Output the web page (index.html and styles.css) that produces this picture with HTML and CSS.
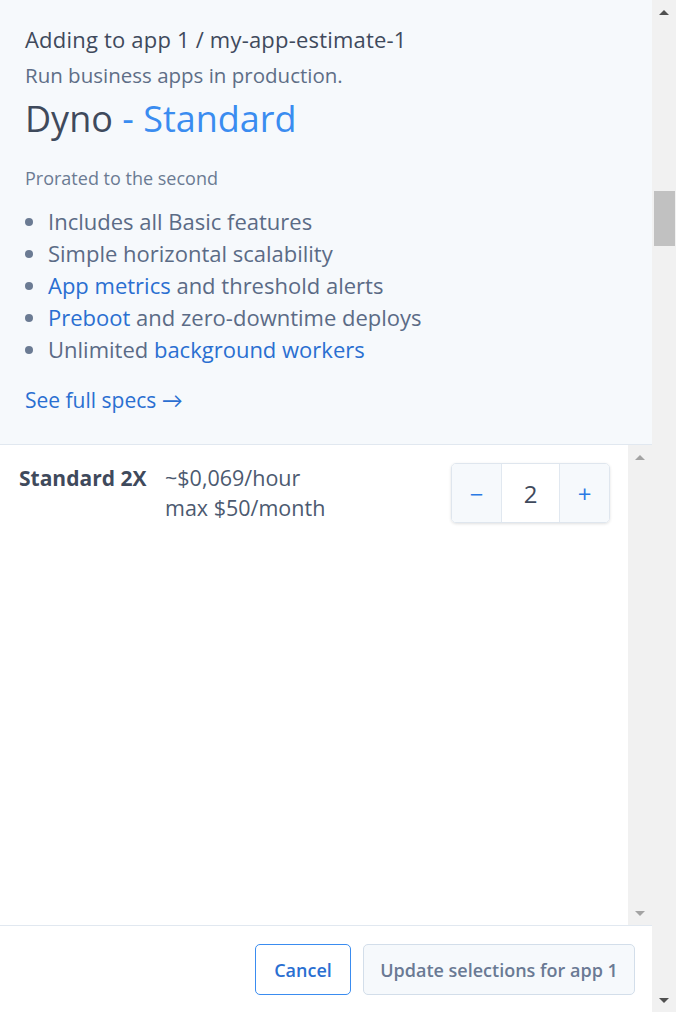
FILE: index.html
```html
<!DOCTYPE html>
<html>
<head>
<meta charset="utf-8">
<link rel="stylesheet" href="styles.css">
</head>
<body>
<div class="main">
  <section class="info">
    <div class="crumb">Adding to app 1 / my-app-estimate-1</div>
    <div class="tagline">Run business apps in production.</div>
    <h1 class="title">Dyno <span class="accent">- Standard</span></h1>
    <div class="prorated">Prorated to the second</div>
    <ul class="features">
      <li>Includes all Basic features</li>
      <li>Simple horizontal scalability</li>
      <li><a class="link">App metrics</a> and threshold alerts</li>
      <li><a class="link">Preboot</a> and zero-downtime deploys</li>
      <li>Unlimited <a class="link">background workers</a></li>
    </ul>
    <a class="link specs">See full specs →</a>
  </section>
  <section class="list">
    <div class="list-content">
      <div class="row">
        <div class="size">Standard 2X</div>
        <div class="price">
          <div>~$0,069/hour</div>
          <div>max $50/month</div>
        </div>
        <div class="stepper">
          <button class="step">&minus;</button>
          <div class="qty">2</div>
          <button class="step">+</button>
        </div>
      </div>
    </div>
    <div class="vscroll inner">
      <div class="arrow up"></div>
      <div class="track"></div>
      <div class="arrow down"></div>
    </div>
  </section>
  <footer class="footer">
    <button class="btn cancel">Cancel</button>
    <button class="btn update">Update selections for app 1</button>
  </footer>
</div>
<div class="vscroll outer">
  <div class="arrow up"></div>
  <div class="track">
    <div class="thumb"></div>
  </div>
  <div class="arrow down"></div>
</div>
</body>
</html>
```

FILE: styles.css
```css
* { box-sizing: border-box; }
html, body { margin: 0; padding: 0; }
body {
  width: 676px;
  height: 1012px;
  overflow: hidden;
  display: flex;
  font-family: "Open Sans", Lato, sans-serif;
  color: #3f4a5c;
  background: #fff;
}
.main {
  width: 652px;
  display: flex;
  flex-direction: column;
}
.info {
  height: 445px;
  background: #f6f9fc;
  border-bottom: 1px solid #e1e8f0;
  padding: 25px 25px 0 25px;
}
.crumb {
  font-size: 22px;
  line-height: 28px;
  letter-spacing: 0.2px;
  color: #3f4a5c;
}
.tagline {
  font-size: 20.5px;
  line-height: 26px;
  margin-top: 9px;
  color: #5e6e87;
}
.title {
  font-size: 36px;
  font-weight: 400;
  line-height: 44px;
  margin: 9px 0 0 0;
  color: #3f4a5c;
}
.accent { color: #3a8cf0; }
.prorated {
  margin-top: 26px;
  font-size: 18px;
  line-height: 22px;
  color: #6b7b93;
}
.features {
  margin: 16px 0 0 0;
  padding-left: 23px;
  font-size: 22px;
  line-height: 32px;
  color: #5b6b86;
}
.features li::marker { color: #6b7b93; }
.link { color: #2a6fd1; text-decoration: none; }
.specs {
  display: block;
  margin-top: 21px;
  font-size: 21px;
  line-height: 28px;
}
.list {
  flex: 1;
  display: flex;
  min-height: 0;
}
.list-content { flex: 1; }
.row {
  display: flex;
  align-items: flex-start;
  padding: 18px 18px 0 19px;
}
.size {
  font-size: 21px;
  font-weight: 700;
  line-height: 30px;
  color: #3f4a5c;
  width: 146px;
}
.price {
  flex: 1;
  font-size: 21.5px;
  line-height: 30px;
  color: #4c5a70;
}
.stepper {
  display: flex;
  height: 60px;
  border: 1px solid #dfe6ee;
  border-radius: 5px;
  box-shadow: 0 1px 3px rgba(0,0,0,0.12);
  overflow: hidden;
  margin-top: 0;
}
.step {
  width: 49px;
  border: none;
  background: #f6f9fc;
  color: #2a7ae4;
  font-family: "Open Sans", sans-serif;
  font-size: 24px;
  padding: 0;
}
.qty {
  width: 59px;
  border-left: 1px solid #e1e8f0;
  border-right: 1px solid #e1e8f0;
  background: #fff;
  display: flex;
  align-items: center;
  justify-content: center;
  font-size: 24px;
  color: #3f4a5c;
}
.footer {
  height: 87px;
  border-top: 1px solid #e1e8f0;
  display: flex;
  justify-content: flex-end;
  align-items: flex-start;
  gap: 12px;
  padding: 18px 17px 0 0;
}
.btn {
  height: 51px;
  border-radius: 5px;
  font-family: "Open Sans", sans-serif;
  font-weight: 600;
  font-size: 18px;
  padding: 0;
}
.cancel {
  width: 96px;
  background: #fff;
  border: 1px solid #3a8cf0;
  color: #2a6fd1;
}
.update {
  width: 272px;
  background: #f6f9fc;
  border: 1px solid #d3deea;
  color: #6a7a94;
}
.vscroll {
  width: 24px;
  display: flex;
  flex-direction: column;
  background: #f1f1f1;
}
.vscroll .track { flex: 1; }
.arrow {
  height: 24px;
  display: flex;
  align-items: center;
  justify-content: center;
}
.arrow::before {
  content: "";
  width: 0;
  height: 0;
  border-left: 5px solid transparent;
  border-right: 5px solid transparent;
}
.arrow.up::before { border-bottom: 5px solid #505050; }
.arrow.down::before { border-top: 5px solid #505050; }
.inner .arrow.up::before { border-bottom-color: #a3a3a3; }
.inner .arrow.down::before { border-top-color: #a3a3a3; }
.outer .track { padding: 167px 1px 0 2px; }
.thumb {
  height: 55px;
  background: #c1c1c1;
}
```
